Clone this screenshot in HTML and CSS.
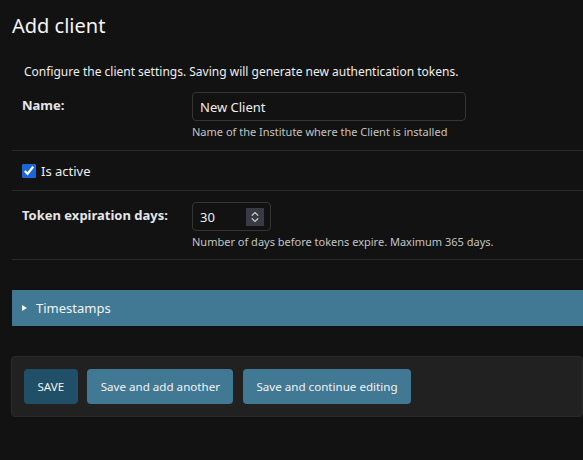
FILE: index.html
```html
<!DOCTYPE html>
<html lang="en">
<head>
<meta charset="utf-8">
<title>Add client</title>
<link rel="stylesheet" href="styles.css">
</head>
<body>
<div class="content">
  <h1 class="title">Add client</h1>
  <form class="form">
    <fieldset class="module">
      <div class="description">Configure the client settings. Saving will generate new authentication tokens.</div>
      <div class="form-row">
        <div class="field">
          <label class="label" for="id_name">Name:</label>
          <div class="control">
            <input class="text-input" type="text" id="id_name" value="New Client">
            <div class="help">Name of the Institute where the Client is installed</div>
          </div>
        </div>
      </div>
      <div class="form-row">
        <div class="check-field">
          <input class="checkbox" type="checkbox" id="id_active" checked>
          <label class="check-label" for="id_active">Is active</label>
        </div>
      </div>
      <div class="form-row form-row-last">
        <div class="field">
          <label class="label" for="id_days">Token expiration days:</label>
          <div class="control">
            <div class="num-wrap">
              <input class="num-input" type="number" id="id_days" value="30">
              <svg class="spinner" width="18" height="18" viewBox="0 0 18 18" aria-hidden="true">
                <rect width="18" height="18" fill="#3a3a45"/>
                <path d="M5.8 7.6 L9 4.6 L12.2 7.6" fill="none" stroke="#d2d2d2" stroke-width="1.3"/>
                <path d="M5.8 10.4 L9 13.4 L12.2 10.4" fill="none" stroke="#d2d2d2" stroke-width="1.3"/>
              </svg>
            </div>
            <div class="help">Number of days before tokens expire. Maximum 365 days.</div>
          </div>
        </div>
      </div>
    </fieldset>
    <details class="collapse">
      <summary class="collapse-head"><span class="tri"></span>Timestamps</summary>
    </details>
    <div class="submit-row">
      <button type="button" class="btn btn-default">SAVE</button>
      <button type="button" class="btn">Save and add another</button>
      <button type="button" class="btn">Save and continue editing</button>
    </div>
  </form>
</div>
</body>
</html>
```
FILE: styles.css
```css
html, body {
  margin: 0;
  padding: 0;
  background: #121212;
  color: #eeeeee;
  font-family: "Noto Sans", "Open Sans", sans-serif;
  overflow: hidden;
}
.content {
  padding: 0 0 0 12px;
}
.title {
  margin: 14px 0 0 0;
  font-size: 20px;
  line-height: 24px;
  font-weight: 400;
  color: #f5f5f5;
}
.form {
  margin-top: 26px;
}
.module {
  margin: 0;
  padding: 0;
  border: 0;
  min-width: 0;
}
.description {
  padding: 0 12px;
  margin-bottom: 1px;
  font-size: 12px;
  line-height: 16px;
  color: #eeeeee;
}
.form-row {
  padding: 10px 10px 11px 10px;
  border-bottom: 1px solid #2a2a2a;
}
.form-row-last {
  padding-bottom: 10px;
}
.field {
  display: flex;
}
.label {
  width: 170px;
  padding-top: 6px;
  font-size: 13px;
  font-weight: 700;
  line-height: 16px;
  color: #e6e6e6;
}
.control {
  display: flex;
  flex-direction: column;
  gap: 3px;
  padding-top: 1px;
}
.text-input, .num-input {
  box-sizing: border-box;
  height: 29px;
  background: #121212;
  color: #eeeeee;
  border: 1px solid #353535;
  border-radius: 4px;
  font-family: "Noto Sans", sans-serif;
  font-size: 13px;
  padding: 0 7px;
  color-scheme: dark;
  margin: 0;
  outline: none;
}
.text-input {
  width: 274px;
}
.num-wrap {
  position: relative;
  width: 79px;
}
.num-input {
  width: 79px;
  -moz-appearance: textfield;
}
.num-input::-webkit-inner-spin-button,
.num-input::-webkit-outer-spin-button {
  -webkit-appearance: none;
  margin: 0;
}
.spinner {
  position: absolute;
  right: 7px;
  top: 6px;
}
.help {
  font-size: 11px;
  line-height: 15px;
  color: #c4c4c4;
}
.check-field {
  display: flex;
  align-items: center;
  gap: 5px;
  padding: 2px 0 0 0;
}
.checkbox {
  margin: 0;
  width: 14px;
  height: 14px;
  accent-color: #1a66d6;
  color-scheme: light;
}
.check-label {
  font-size: 13px;
  line-height: 16px;
  color: #eeeeee;
}
.collapse {
  margin-top: 30px;
}
.collapse-head {
  list-style: none;
  display: flex;
  align-items: center;
  height: 36px;
  background: #417893;
  color: #f3f3f3;
  font-size: 13px;
  padding-left: 10px;
  cursor: pointer;
}
.collapse-head::-webkit-details-marker {
  display: none;
}
.tri {
  width: 0;
  height: 0;
  border-top: 3px solid transparent;
  border-bottom: 3px solid transparent;
  border-left: 5px solid #f3f3f3;
  margin-right: 9px;
}
.submit-row {
  margin: 30px 0 0 -1px;
  padding: 12px;
  background: #212121;
  border: 1px solid #2a2a2a;
  border-radius: 4px;
  display: flex;
  gap: 9.5px;
}
.btn {
  height: 35px;
  padding: 0 13.5px;
  border: 0;
  border-radius: 4px;
  background: #417893;
  color: #f3f3f3;
  font-family: "Noto Sans", sans-serif;
  font-size: 11.6px;
  cursor: pointer;
}
.btn-default {
  background: #205067;
}
```
